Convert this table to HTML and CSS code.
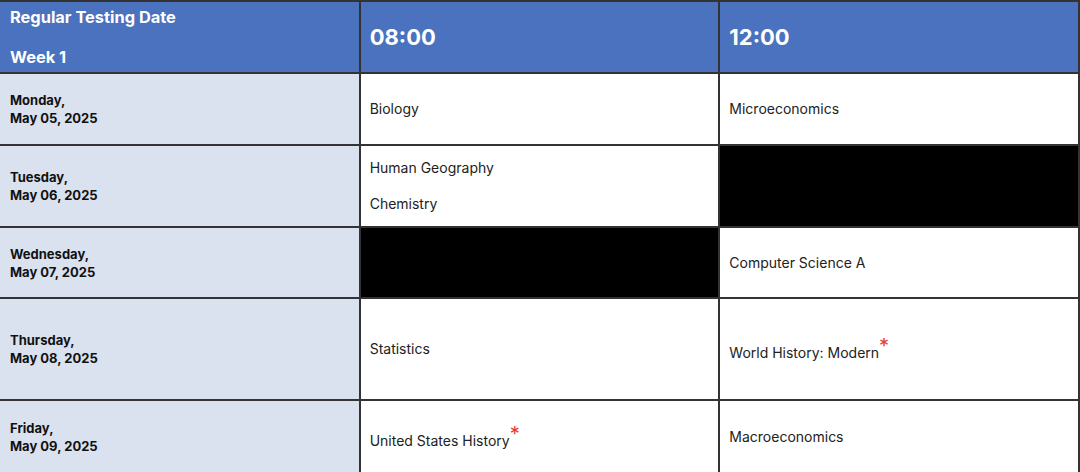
FILE: index.html
```html
<!DOCTYPE html>
<html lang="en">
<head>
    <meta charset="UTF-8">
    <meta name="viewport" content="width=device-width, initial-scale=1.0">
    <title>Testing Schedule - Week 1</title>
    <link rel="stylesheet" href="styles.css">
</head>
<body>
    <table class="schedule">
        <colgroup>
            <col class="col-day">
            <col class="col-slot">
            <col class="col-slot">
        </colgroup>
        <thead>
            <tr class="head-row">
                <th class="week">
                    <p>Regular Testing Date</p>
                    <p>Week 1</p>
                </th>
                <th class="time">08:00</th>
                <th class="time">12:00</th>
            </tr>
        </thead>
        <tbody>
            <tr class="row-mon">
                <td class="day">Monday,<br>May 05, 2025</td>
                <td>Biology</td>
                <td>Microeconomics</td>
            </tr>
            <tr class="row-tue">
                <td class="day">Tuesday,<br>May 06, 2025</td>
                <td>
                    <p>Human Geography</p>
                    <p>Chemistry</p>
                </td>
                <td class="blocked"></td>
            </tr>
            <tr class="row-wed">
                <td class="day">Wednesday,<br>May 07, 2025</td>
                <td class="blocked"></td>
                <td>Computer Science A</td>
            </tr>
            <tr class="row-thu">
                <td class="day">Thursday,<br>May 08, 2025</td>
                <td>Statistics</td>
                <td>World History: Modern<span class="req">*</span></td>
            </tr>
            <tr class="row-fri">
                <td class="day">Friday,<br>May 09, 2025</td>
                <td>United States History<span class="req">*</span></td>
                <td>Macroeconomics</td>
            </tr>
        </tbody>
    </table>
</body>
</html>
```

FILE: styles.css
```css
body {
  margin: 0;
  background: #fff;
  font-family: Inter, "Noto Sans", sans-serif;
  color: #222;
}
.schedule {
  width: 1080px;
  table-layout: fixed;
  border-collapse: collapse;
  border-top: 2px solid #333;
  border-right: 2px solid #333;
}
.col-slot, .col-day {
  width: 33.33%;
}
.schedule th, .schedule td {
  border: 2px solid #333;
  padding: 0 9px;
  text-align: left;
  vertical-align: middle;
  font-size: 14px;
  line-height: 18px;
}
.schedule tr > :first-child {
  border-left: 0;
  padding-left: 10px;
}
.schedule p {
  margin: 0;
}
.schedule td p + p {
  margin-top: 18px;
}
.schedule thead th {
  background: #4a72be;
  color: #fff;
}
.schedule .week p {
  font-size: 16.4px;
  line-height: 20px;
}
.schedule .week p + p {
  margin-top: 20px;
}
.schedule .time {
  font-size: 22px;
  font-weight: 700;
}
.schedule .day {
  background: #dae1ef;
  font-weight: 700;
  font-size: 13px;
  color: #111;
}
.blocked {
  background: #000;
}
.req {
  color: #e8382f;
  font-size: 20px;
  vertical-align: 5px;
  line-height: 18px;
}
.head-row { height: 72px; }
.row-mon { height: 72px; }
.row-tue { height: 82px; }
.row-wed { height: 71px; }
.row-thu { height: 102px; }
.row-fri { height: 74px; }
```
